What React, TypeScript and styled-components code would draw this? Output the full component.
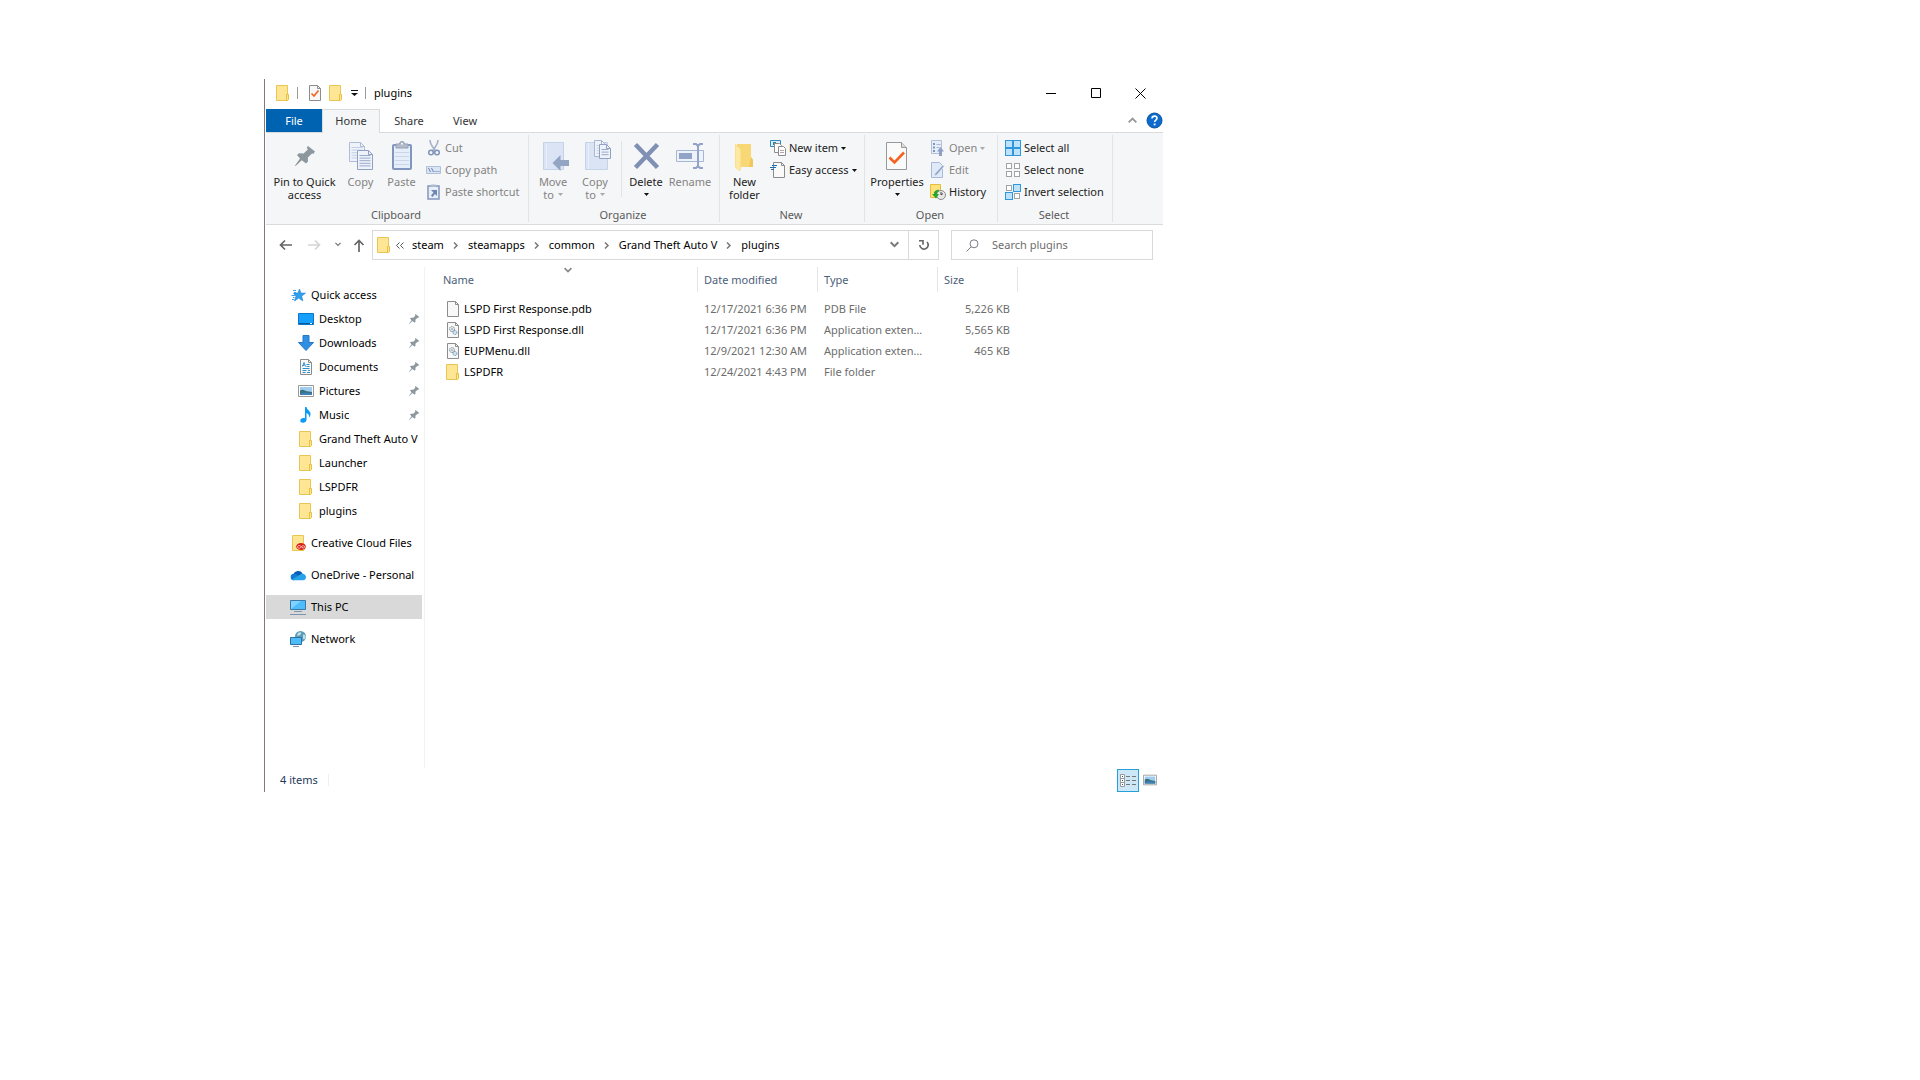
import React from "react";
import styled, { createGlobalStyle } from "styled-components";

const Global = createGlobalStyle`
  *, *::before, *::after { box-sizing: border-box; }
  body {
    margin: 0;
    background: #fff;
    color: #000;
    font: 11px/16px "Noto Sans", "Open Sans", sans-serif;
  }
  button, input { font: inherit; color: inherit; }
`;

const Page = styled.div`
  padding: 79px 24px 24px 264px;
`;

const Window = styled.main`
  max-width: 899px;
  padding-left: 1px;
  border-left: 1px solid #84757f;
  background: #fff;
`;

const Plain = styled.button`
  display: flex;
  align-items: center;
  justify-content: center;
  padding: 0;
  border: 0;
  background: none;
  white-space: nowrap;
`;

/* Title bar */
const TitleBar = styled.header`
  display: flex;
  align-items: center;
  height: 30px;
  padding: 0 0 2px 9px;
`;
const QuickButton = styled(Plain)<{ $w?: number }>`
  width: ${(p) => p.$w ?? 16}px;
  height: 16px;
  margin-right: 6px;
`;
const Tick = styled.span`
  width: 1px;
  height: 12px;
  margin-right: 8px;
  background: #999;
`;
const Title = styled.h1`
  flex: 1;
  margin: 0;
  font-size: 11px;
  font-weight: 400;
`;
const Caption = styled(Plain)`
  width: 45px;
  height: 28px;
`;

/* Tabs */
const Tabs = styled.nav`
  display: flex;
  align-items: stretch;
  height: 24px;
  border-bottom: 1px solid #dadbdc;
`;
const Tab = styled(Plain)<{ $kind?: "file" | "active"; $w?: number }>`
  width: ${(p) => p.$w ?? 58}px;
  color: ${(p) => (p.$kind === "file" ? "#fff" : "#333")};
  background: ${(p) => (p.$kind === "file" ? "#0063b1" : p.$kind === "active" ? "#f5f6f7" : "none")};
  ${(p) => p.$kind === "active" && "border: 1px solid #dadbdc; border-bottom: 0; margin-bottom: -1px; padding-bottom: 1px;"}
`;
const TabTools = styled.div`
  display: flex;
  align-items: center;
  gap: 9px;
  margin-left: auto;
`;

/* Ribbon */
const Ribbon = styled.section`
  display: flex;
  height: 92px;
  padding-top: 2px;
  background: #f5f6f7;
  border-bottom: 1px solid #dadbdc;
`;
const Group = styled.div<{ $w: number }>`
  display: flex;
  flex-direction: column;
  justify-content: space-between;
  width: ${(p) => p.$w}px;
  height: 87px;
  padding: 0 3px;
  border-right: 1px solid #e2e3e4;
`;
const Tools = styled.div`
  display: flex;
`;
const GroupName = styled.div`
  padding-right: 2px;
  text-align: center;
  color: #5a5a5a;
  line-height: 14px;
`;
const Big = styled(Plain)<{ $w?: number; $off?: boolean }>`
  flex-direction: column;
  justify-content: flex-start;
  width: ${(p) => p.$w ?? 42}px;
  padding-top: 5px;
  line-height: 13px;
  color: ${(p) => (p.$off ? "#838383" : "#222")};
  svg.big { margin-bottom: 3px; }
`;
const Line = styled.span`
  display: flex;
  align-items: center;
  gap: 4px;
  min-height: 13px;
`;
const Stack = styled.div`
  display: flex;
  flex-direction: column;
  align-items: flex-start;
  padding: 2px 0 0 4px;
`;
const Small = styled(Plain)<{ $off?: boolean }>`
  gap: 3px;
  height: 22px;
  color: ${(p) => (p.$off ? "#838383" : "#222")};
`;
const InnerRule = styled.span`
  width: 1px;
  height: 56px;
  margin: 6px 3px 0 5px;
  background: #e2e3e4;
`;

/* Address row */
const AddressRow = styled.div`
  display: flex;
  align-items: center;
  padding: 5px 10px 7px 11px;
`;
const NavButton = styled(Plain)<{ $w?: number }>`
  width: ${(p) => p.$w ?? 16}px;
  height: 30px;
`;
const History = styled.div`
  display: flex;
  gap: 10px;
  width: 95px;
`;
const Address = styled.div`
  display: flex;
  flex: 1;
  align-items: center;
  height: 30px;
  margin-right: 12px;
  padding-left: 3px;
  border: 1px solid #d9d9d9;
`;
const Crumbs = styled.ol`
  display: flex;
  flex: 1;
  align-items: center;
  margin: 0;
  padding: 0 0 0 4px;
  list-style: none;
`;
const Crumb = styled.li`
  display: flex;
  align-items: center;
  svg { margin: 0 9px 0 8px; }
`;
const Overflow = styled(Plain)`
  margin-right: 8px;
`;
const Refresh = styled(Plain)`
  width: 30px;
  height: 28px;
  margin-left: 9px;
  border-left: 1px solid #d9d9d9;
`;
const Search = styled.label`
  display: flex;
  align-items: center;
  gap: 13px;
  width: 202px;
  height: 30px;
  padding-left: 14px;
  border: 1px solid #d9d9d9;
`;
const SearchInput = styled.input`
  flex: 1;
  min-width: 0;
  padding: 0;
  border: 0;
  outline: 0;
  background: none;
  &::placeholder { color: #6d6d6d; opacity: 1; }
`;

/* Body */
const Body = styled.div`
  display: flex;
  min-height: 501px;
`;
const Side = styled.nav`
  width: 159px;
  padding: 16px 2px 0 0;
  border-right: 1px solid #f2f2f2;
`;
const SideList = styled.ul`
  margin: 0 0 8px;
  padding: 0;
  list-style: none;
`;
const SideLink = styled.a<{ $deep?: boolean; $on?: boolean }>`
  display: flex;
  align-items: center;
  gap: 5px;
  height: 24px;
  padding: 0 3px 0 ${(p) => (p.$deep ? 32 : 24)}px;
  background: ${(p) => (p.$on ? "#d9d9d9" : "none")};
  color: #000;
  text-decoration: none;
  white-space: nowrap;
`;
const SideText = styled.span`
  flex: 1;
`;
const Content = styled.div`
  flex: 1;
  padding-left: 8px;
`;
const Files = styled.table`
  width: 585px;
  table-layout: fixed;
  border-collapse: collapse;
`;
const Head = styled.th<{ $w?: number }>`
  ${(p) => p.$w && `width: ${p.$w}px;`}
  padding: 0 0 6px;
  color: #4c607a;
  font-weight: 400;
  text-align: left;
`;
const HeadCell = styled.div<{ $first?: boolean }>`
  display: grid;
  grid-template-rows: 5px 20px;
  padding: 0 ${(p) => (p.$first ? 4 : 0)}px 0 ${(p) => (p.$first ? 10 : 6)}px;
  border-right: 1px solid #e5e5e5;
  line-height: 16px;
  svg { display: block; justify-self: center; }
  span { grid-row: 2; }
`;
const Cell = styled.td<{ $right?: boolean; $name?: boolean; $pad?: number }>`
  height: 21px;
  padding: 0 ${(p) => p.$pad ?? 8}px 0 6px;
  overflow: hidden;
  color: ${(p) => (p.$name ? "#000" : "#6d6d6d")};
  text-align: ${(p) => (p.$right ? "right" : "left")};
  text-overflow: ellipsis;
  white-space: nowrap;
`;
const FileName = styled.span`
  display: flex;
  align-items: center;
  gap: 3px;
  padding-left: 6px;
`;
const Status = styled.footer`
  display: flex;
  align-items: center;
  height: 24px;
  padding: 0 2px 0 14px;
`;
const Count = styled.span`
  padding-right: 10px;
  border-right: 1px solid #f0f0f0;
  color: #1e395b;
  line-height: 12px;
`;
const Views = styled.div`
  display: flex;
  align-items: center;
  margin-left: auto;
`;
const ViewButton = styled(Plain)<{ $on?: boolean }>`
  width: 22px;
  height: 23px;
  border: 1px solid ${(p) => (p.$on ? "#26a0da" : "transparent")};
  background: ${(p) => (p.$on ? "#cce8f6" : "none")};
`;

/* Icons */
type Kids = { children: React.ReactNode };
const I16 = ({ children }: Kids) => (
  <svg width="16" height="16" viewBox="0 0 16 16" fill="none" aria-hidden="true">{children}</svg>
);
const I32 = ({ children }: Kids) => (
  <svg className="big" width="32" height="32" viewBox="0 0 32 32" fill="none" aria-hidden="true">{children}</svg>
);

const FolderShape = () => (
  <>
    <path d="M1.5.5h11v15h-11z" fill="#ffe694" stroke="#e9c651" />
    <path d="M11.5 9.5h2v5l-1 1h-1z" fill="#ffe694" stroke="#e9bf3f" />
  </>
);
const Folder = () => <I16><FolderShape /></I16>;

const Triangle = ({ color = "#111" }: { color?: string }) => (
  <svg width="5" height="3" viewBox="0 0 5 3" aria-hidden="true"><path d="M0 0h5L2.5 3z" fill={color} /></svg>
);

const PinPath = "M13 0 20 5.5 18.5 7.8 17 7.4 12.8 11.6 13 15.6 11 17.6 6.8 14.2.6 20 0 19.4 5 12.4 2 9 4 7.3 8.6 7.6 12.8 3.6 11.8 1.6Z";
const Pin = () => (
  <svg width="10" height="10" viewBox="0 0 20 20" aria-hidden="true"><path d={PinPath} fill="#8d979e" /></svg>
);

type DocProps = { x: number; y: number; w: number; h: number; stroke: string; line: string };
const Doc = ({ x, y, w, h, stroke, line }: DocProps) => {
  const rows: number[] = [];
  for (let r = y + 5.5; r < y + h - 2; r += 2.6) rows.push(r);
  return (
    <>
      <path d={`M${x + 0.5} ${y + 0.5}h${w - 5}l4 4v${h - 5}h${-(w - 1)}z`} fill="#eef3fb" stroke={stroke} />
      <path d={`M${x + w - 4.5} ${y + 0.5}v4h4`} stroke={stroke} />
      {rows.map((r) => <path key={r} d={`M${x + 2.5} ${r}h${w - 5}`} stroke={line} />)}
    </>
  );
};

const CopyIcon = () => (
  <I32>
    <Doc x={4} y={2} w={16} h={20} stroke="#afbcd5" line="#c3cfe4" />
    <Doc x={12} y={10} w={16} h={20} stroke="#91a1c2" line="#9aa9c8" />
  </I32>
);
const PasteIcon = () => (
  <I32>
    <rect x="7" y="5" width="18" height="24" rx="1" fill="#e6eefa" stroke="#8296bd" strokeWidth="2" />
    <path d="M9 12.5h14M9 16.5h14M9 20.5h14M9 24.5h14" stroke="#c8d5ea" />
    <path d="M10 4h3.5a2.5 2.5 0 0 1 5 0H22v4H10z" fill="#b2bbc9" stroke="#929fb6" />
    <circle cx="16" cy="3.8" r="1" fill="#f4f5f7" />
  </I32>
);
const MoveIcon = () => (
  <I32>
    <path d="M6.5 2.5h20v27h-20z" fill="#dae4f4" stroke="#c5d2e8" />
    <path d="M9.5 3v26" stroke="#e9f0fa" />
    <path d="M15.5 23 23.5 15v5H32v6h-8.5v5z" fill="#94a4c3" />
  </I32>
);
const CopyToIcon = () => (
  <I32>
    <path d="M6.5 2.5h22v27h-22z" fill="#dae4f4" stroke="#c5d2e8" />
    <path d="M9.5 3v26" stroke="#e9f0fa" />
    <Doc x={15} y={0} w={12} h={17} stroke="#a9b7d1" line="#c3cfe4" />
    <Doc x={20} y={4} w={12} h={15} stroke="#91a1c2" line="#9aa9c8" />
  </I32>
);
const NewFolderIcon = () => (
  <I32>
    <path d="M8 4h14v13l2 3v7H8z" fill="#f8d775" />
    <path d="M22 17l2 3v7h-4z" fill="#efc75b" />
    <path d="M6.5 4.5l5 5v20l-1 1.5-4-4z" fill="#ffe9a2" stroke="#fbdf8b" />
  </I32>
);
const PropsShape = () => (
  <>
    <path d="M.5.5h15l5 5v22H.5z" fill="#fafafa" stroke="#999" />
    <path d="M15.5.5v5h5" fill="#ddd" stroke="#999" />
    <path d="M3.5 15.5l5 5L18 10.5" stroke="#f4621f" strokeWidth="2.6" />
  </>
);

const Grid = ({ on }: { on: boolean[] }) => (
  <I16>
    {on.map((sel, i) => {
      const x = (i % 2) * 8;
      const y = Math.floor(i / 2) * 8;
      return sel
        ? <rect key={i} x={x + 0.5} y={y + 0.5} width="7" height="7" fill="#bfe2fb" stroke="#2f96e0" />
        : <rect key={i} x={x + 1.5} y={y + 1.5} width="5" height="5" fill="#fff" stroke="#a3a3a3" />;
    })}
  </I16>
);

const Chevron = ({ w = 6, color = "#777", d = "M.5 1l3 3 3-3" }: { w?: number; color?: string; d?: string }) => (
  <svg width={w} height={w} viewBox="0 0 7 7" fill="none" aria-hidden="true"><path d={d} stroke={color} strokeWidth="1.5" /></svg>
);

const FileShape = () => (
  <>
    <path d="M2.5.5h8l3 3v12h-11z" fill="#f8f8f8" stroke="#8c8c8c" />
    <path d="M10.5.5v3h3" stroke="#8c8c8c" />
  </>
);
const BlankFile = () => <I16><FileShape /></I16>;
const DllFile = () => (
  <I16>
    <FileShape />
    <circle cx="7" cy="7" r="2.5" fill="#e5eaee" stroke="#7d8c97" strokeDasharray="1.5 .6" />
    <circle cx="7" cy="7" r=".8" fill="#7d8c97" />
    <circle cx="10" cy="10.5" r="2" fill="#cfe3f2" stroke="#6d94b0" strokeDasharray="1.3 .5" />
  </I16>
);
const PictureShape = () => (
  <>
    <path d="M.5 2.5h15v11H.5z" fill="#fff" stroke="#999" />
    <path d="M2 4h12v8H2z" fill="#9fcdf0" />
    <path d="M2 7.500c3-2 5 0 7 .8l5 .7v3H2z" fill="#39707d" />
    <path d="M2 10.5c4-1.500 8-1 12-.3V12H2z" fill="#3f7fb4" />
  </>
);
const PictureIcon = () => <I16><PictureShape /></I16>;

const sideTop = [
  { name: "Desktop", pin: true, icon: <I16><path d="M.5 2.5h15v11H.5z" fill="#16a0fb" stroke="#0b78cb" /><path d="M1 12.5h14" stroke="#075a9c" /><path d="M12 12.5h2" stroke="#fff" /></I16> },
  { name: "Downloads", pin: true, icon: <I16><path d="M5 .5h6v7h4.500L8 15.500.5 7.500H5z" fill="#2e8fe4" stroke="#2478c6" /></I16> },
  { name: "Documents", pin: true, icon: <I16><FileShape /><path d="M4.500 6.500h2M8.500 5.500h3M8.500 7.500h3M4.500 9.500h7M4.500 11.500h4M10 11.500h2M4.500 13.500h3M9 13.500h3" stroke="#2f8fce" /><path d="M4.500 7.500 6 3.500l1.500 4" stroke="#2f8fce" /></I16> },
  { name: "Pictures", pin: true, icon: <PictureIcon /> },
  { name: "Music", pin: true, icon: <I16><path d="M7 0h1.500c.3 3 4.500 4 4 7.500-.2 1.500-1 2.500-1.500 3 .5-2-.5-4-2.500-4.500v6.500c0 2-1.500 3.300-3.500 3.300S2.300 14.800 2.300 13.500 3.800 11 5.500 11c.6 0 1.100.1 1.500.3z" fill="#0a9bf5" /></I16> },
  { name: "Grand Theft Auto V", icon: <Folder /> },
  { name: "Launcher", icon: <Folder /> },
  { name: "LSPDFR", icon: <Folder /> },
  { name: "plugins", icon: <Folder /> },
];

const StarIcon = () => (
  <I16>
    <path d="M9.500 2l1.400 4 4.600.2-3.800 2.900 1.100 4.800-4.100-2.800L4.500 14l1.400-4.700L3.500 6h4.500z" fill="#2f9ff0" stroke="#1c7fc9" strokeWidth=".6" />
    <path d="M3 3.500h3M4 5.500h2M1.500 8.500h4M3 10.500h1.500M2 12.500h2" stroke="#3aa0ea" />
  </I16>
);
const CreativeIcon = () => (
  <I16>
    <g transform="translate(1 0)"><FolderShape /></g>
    <ellipse cx="11" cy="11.5" rx="4.8" ry="3.6" fill="#da1f16" />
    <path d="M7.500 12c0-1.500 2-2 3.300-.8l1.400 1.400c1 .8 2.400.3 2.400-.8s-1.500-1.500-2.400-.7l-1.800 1.600c-1.200.9-2.900.4-2.900-.7z" stroke="#ffe4df" strokeWidth=".8" />
  </I16>
);
const CloudIcon = () => (
  <I16>
    <path d="M3.500 7.500a5 5 0 0 1 9-1.200l-2 5H2z" fill="#0a5db3" />
    <path d="M3.300 6.800c2-.5 3.500.3 5 1.700l-4 4.800H3.500a3.300 3.300 0 0 1-.2-6.500z" fill="#0f7bd2" />
    <path d="M2 12.500 11 7c2.500-1.200 5 .8 5 3.300 0 1.700-1.300 3-3 3H3.500c-.6 0-1.200-.4-1.500-.8z" fill="#29a3e8" />
  </I16>
);
const PcIcon = () => (
  <I16>
    <path d="M.5 1.5h15v9H.5z" fill="#4ebbfb" stroke="#3879a8" />
    <path d="M1 10V2h10z" fill="#82d2ff" />
    <path d="M4 12.500h8M0 15.500h16" stroke="#7b96ad" />
  </I16>
);
const NetworkIcon = () => (
  <I16>
    <circle cx="10.500" cy="5.500" r="5.500" fill="#5d9cb8" />
    <path d="M8 2c2-1.500 3.500-.8 3 .7S8.500 5 7 4.500zM13 3.500c2 0 3 1 2.500 3s-2 2.500-2.500 1z" fill="#c2dfe2" />
    <path d="M.5 6.500h11v7H.5z" fill="#4ebbfb" stroke="#2d70a3" />
    <path d="M3 15.500h6" stroke="#7b96ad" />
  </I16>
);

const roots = [
  { name: "Creative Cloud Files", icon: <CreativeIcon /> },
  { name: "OneDrive - Personal", icon: <CloudIcon /> },
  { name: "This PC", icon: <PcIcon />, on: true },
  { name: "Network", icon: <NetworkIcon /> },
];

const files = [
  { name: "LSPD First Response.pdb", date: "12/17/2021 6:36 PM", type: "PDB File", size: "5,226 KB", icon: <BlankFile /> },
  { name: "LSPD First Response.dll", date: "12/17/2021 6:36 PM", type: "Application extension", size: "5,565 KB", icon: <DllFile /> },
  { name: "EUPMenu.dll", date: "12/9/2021 12:30 AM", type: "Application extension", size: "465 KB", icon: <DllFile /> },
  { name: "LSPDFR", date: "12/24/2021 4:43 PM", type: "File folder", size: "", icon: <Folder /> },
];

const crumbs = ["steam", "steamapps", "common", "Grand Theft Auto V", "plugins"];

export default function App() {
  return (
    <Page>
      <Global />
      <Window>
        <TitleBar>
          <QuickButton aria-label="Folder menu"><Folder /></QuickButton>
          <Tick />
          <QuickButton aria-label="Properties">
            <I16><g transform="translate(1 0)"><FileShape /><path d="M4.500 8.500 7 11l4.500-5.500" stroke="#f4621f" strokeWidth="1.600" /></g></I16>
          </QuickButton>
          <QuickButton aria-label="New folder"><Folder /></QuickButton>
          <QuickButton $w={9} aria-label="Customize toolbar">
            <svg width="7" height="6" viewBox="0 0 7 6" aria-hidden="true"><path d="M0 0h7v1H0zM0 3h7L3.500 6z" fill="#111" /></svg>
          </QuickButton>
          <Tick />
          <Title>plugins</Title>
          <Caption aria-label="Minimize"><svg width="10" height="10"><path d="M0 5.500h10" stroke="#000" /></svg></Caption>
          <Caption aria-label="Maximize"><svg width="10" height="10"><path d="M.5.5h9v9h-9z" fill="none" stroke="#000" /></svg></Caption>
          <Caption aria-label="Close"><svg width="11" height="11"><path d="M.5.5l10 10M10.500.5l-10 10" stroke="#000" /></svg></Caption>
        </TitleBar>

        <Tabs>
          <Tab $kind="file" $w={56}>File</Tab>
          <Tab $kind="active">Home</Tab>
          <Tab>Share</Tab>
          <Tab $w={54}>View</Tab>
          <TabTools>
            <Plain aria-label="Collapse ribbon"><Chevron w={9} color="#999" d="M.5 5l3-3 3 3" /></Plain>
            <Plain aria-label="Help">
              <svg width="17" height="17" viewBox="0 0 17 17" aria-hidden="true">
                <circle cx="8.500" cy="8.500" r="7.500" fill="#0a6cce" stroke="#0a519c" />
                <path d="M6 6.500c0-3.200 5-3 5-.2 0 1.800-2.400 1.800-2.400 3.700" fill="none" stroke="#fff" strokeWidth="1.600" />
                <path d="M7.700 11.500h1.800v1.800H7.700z" fill="#fff" />
              </svg>
            </Plain>
          </TabTools>
        </Tabs>

        <Ribbon>
          <Group $w={263}>
            <Tools>
              <Big $w={71}>
                <I32><path d={PinPath} transform="translate(6 6)" fill="#8d979e" /></I32>
                <Line>Pin to Quick</Line><Line>access</Line>
              </Big>
              <Big $w={41} $off><CopyIcon /><Line>Copy</Line></Big>
              <Big $w={41} $off><PasteIcon /><Line>Paste</Line></Big>
              <Stack>
                <Small $off>
                  <I16><path d="M4 0c0 4 2 6 5.500 11M12 0c0 4-2 6-5.500 11" stroke="#a6b2c6" strokeWidth="1.600" /><circle cx="5" cy="12.500" r="2.300" stroke="#7f92b8" strokeWidth="1.500" /><circle cx="11" cy="12.500" r="2.300" stroke="#7f92b8" strokeWidth="1.500" /></I16>
                  Cut
                </Small>
                <Small $off>
                  <I16><path d="M.5 4.500h14v7H.5z" fill="#d9e4f5" stroke="#b1c0da" /><path d="M2.500 6l2 4M5.500 6l2 4M8.500 9.500h1M10.500 9.500h1M12.500 9.500h1" stroke="#6f83ab" /></I16>
                  Copy path
                </Small>
                <Small $off>
                  <I16><path d="M2 2h11v13H2z" fill="#e6eefa" stroke="#8296bd" strokeWidth="1.500" /><path d="M5 .5h5v2.500H5z" fill="#b2bbc9" /><path d="M5 6h6v6L9 10l-2.500 3-1.500-1.500L7.500 8.500z" fill="#6f86b2" /></I16>
                  Paste shortcut
                </Small>
              </Stack>
            </Tools>
            <GroupName>Clipboard</GroupName>
          </Group>

          <Group $w={191}>
            <Tools>
              <Big $off><MoveIcon /><Line>Move</Line><Line>to <Triangle color="#aaa" /></Line></Big>
              <Big $off><CopyToIcon /><Line>Copy</Line><Line>to <Triangle color="#aaa" /></Line></Big>
              <InnerRule />
              <Big>
                <I32><path d="M5.500 4.500l22 23M27.500 4.500l-22 23" stroke="#7f90b4" strokeWidth="4.500" /></I32>
                <Line>Delete</Line><Line><Triangle /></Line>
              </Big>
              <Big $w={46} $off>
                <I32><path d="M2.500 10.500h27v11h-27z" fill="#eef3fb" stroke="#a6b7d6" /><path d="M5 13h13v6H5z" fill="#91a3c6" /><path d="M24 4v24M19 4h3l2 2 2-2h3M19 28h3l2-2 2 2h3" stroke="#91a3c6" strokeWidth="2" /></I32>
                <Line>Rename</Line>
              </Big>
            </Tools>
            <GroupName>Organize</GroupName>
          </Group>

          <Group $w={145}>
            <Tools>
              <Big $w={43}><NewFolderIcon /><Line>New</Line><Line>folder</Line></Big>
              <Stack>
                <Small>
                  <I16><path d="M.5.5h10v6H.5z" fill="#d8eefb" stroke="#3487b8" /><path d="M3 2h3v3H3z" fill="#3b7f9f" /><path d="M4.500 3.500h5l2 2v7h-7z" fill="#fff" stroke="#8c8c8c" /><path d="M8.500 6.500h5l2 2v7h-7z" fill="#fff" stroke="#8c8c8c" /><path d="M10 10.500h4M10 12.500h4" stroke="#b9a5a5" /></I16>
                  New item <Triangle />
                </Small>
                <Small>
                  <I16><path d="M3.500.5h8l3 3v12h-11z" fill="#fafafa" stroke="#8c8c8c" /><path d="M11.500.5v3h3" stroke="#8c8c8c" /><path d="M2 3.500h5M0 5.500h6M1 7.500h3" stroke="#1b6fb0" /></I16>
                  Easy access <Triangle />
                </Small>
              </Stack>
            </Tools>
            <GroupName>New</GroupName>
          </Group>

          <Group $w={133}>
            <Tools>
              <Big $w={58}>
                <I32><g transform="translate(5 2)"><PropsShape /></g></I32>
                <Line>Properties</Line><Line><Triangle /></Line>
              </Big>
              <Stack>
                <Small $off>
                  <I16><path d="M1.500.5h10v13h-10z" fill="#e6eefa" stroke="#b1bfd8" /><path d="M3 3h2v2H3zM3 6.500h2v2H3zM3 10h2v2H3z" fill="#8093bb" /><path d="M6.500 4.500h4M6.500 7.500h3" stroke="#a9b8d5" /><path d="M10.500 7 14 11.500h-2V16H9v-4.500H7z" fill="#8ea0c4" /></I16>
                  Open <Triangle color="#aaa" />
                </Small>
                <Small $off>
                  <I16><path d="M1.500.5h8l3 3v12h-11z" fill="#dfe9f8" stroke="#a9bad8" /><path d="M14.500 4 7 13l-3 1.500L5 11.500 12.500 3z" fill="#94a6c9" stroke="#eef3fb" strokeWidth=".7" /></I16>
                  Edit
                </Small>
                <Small>
                  <I16><path d="M.5.5h10v13H.5z" fill="#ffe27b" stroke="#e5bd3c" /><circle cx="11" cy="11" r="4.500" fill="#e8e8e8" stroke="#8b8b8b" /><path d="M11 8v3l2-1.500" stroke="#444" /><path d="M8.500 5.500C5 6 3.500 8 4 10H2l4 4.500L9 10H7c0-1.500.5-2.500 2-3z" fill="#29a52b" /></I16>
                  History
                </Small>
              </Stack>
            </Tools>
            <GroupName>Open</GroupName>
          </Group>

          <Group $w={115}>
            <Stack>
              <Small><Grid on={[true, true, true, true]} />Select all</Small>
              <Small><Grid on={[false, false, false, false]} />Select none</Small>
              <Small><Grid on={[false, true, true, false]} />Invert selection</Small>
            </Stack>
            <GroupName>Select</GroupName>
          </Group>
        </Ribbon>

        <AddressRow>
          <History>
            <NavButton aria-label="Back"><svg width="13" height="12" fill="none"><path d="M13 6H1.500M6 1.500 1.500 6 6 10.500" stroke="#666" strokeWidth="1.700" /></svg></NavButton>
            <NavButton $w={22} aria-label="Forward"><svg width="13" height="12" fill="none"><path d="M0 6h11.500M7 1.500 11.500 6 7 10.500" stroke="#d5d5d5" strokeWidth="1.700" /></svg></NavButton>
            <NavButton $w={6} aria-label="Recent locations"><Chevron /></NavButton>
            <NavButton aria-label="Up"><svg width="12" height="13" fill="none"><path d="M6 13V1.500M1.500 6 6 1.500 10.500 6" stroke="#666" strokeWidth="1.700" /></svg></NavButton>
          </History>
          <Address>
            <Folder />
            <Crumbs>
              <li>
                <Overflow aria-label="Parent folders">
                  <svg width="8" height="7" fill="none" aria-hidden="true"><path d="M3.500.5l-3 3 3 3M7.500.5l-3 3 3 3" stroke="#555" /></svg>
                </Overflow>
              </li>
              {crumbs.map((c, i) => (
                <Crumb key={c}>
                  <Plain>{c}</Plain>
                  {i < crumbs.length - 1 && <Chevron w={7} d="M2 .5l3 3-3 3" />}
                </Crumb>
              ))}
            </Crumbs>
            <Plain aria-label="Previous locations"><Chevron w={9} /></Plain>
            <Refresh aria-label="Refresh">
              <svg width="12" height="12" viewBox="0 0 12 12" fill="none" aria-hidden="true"><path d="M9 3a4.200 4.200 0 1 1-7.200 3" stroke="#666" strokeWidth="1.600" /><path d="M1 1.800h4v4" stroke="#666" strokeWidth="1.600" /></svg>
            </Refresh>
          </Address>
          <Search aria-label="Search plugins">
            <svg width="13" height="13" fill="none" aria-hidden="true"><circle cx="8" cy="4.800" r="4" stroke="#7a7a85" /><path d="M5.200 7.700.5 12.500" stroke="#7a7a85" /></svg>
            <SearchInput type="text" placeholder="Search plugins" />
          </Search>
        </AddressRow>

        <Body>
          <Side>
            <SideList>
              <li><SideLink href="#quick"><StarIcon /><SideText>Quick access</SideText></SideLink></li>
              {sideTop.map((s) => (
                <li key={s.name}>
                  <SideLink href="#folder" $deep>{s.icon}<SideText>{s.name}</SideText>{s.pin && <Pin />}</SideLink>
                </li>
              ))}
            </SideList>
            {roots.map((r) => (
              <SideList key={r.name}>
                <li><SideLink href="#root" $on={r.on}>{r.icon}<SideText>{r.name}</SideText></SideLink></li>
              </SideList>
            ))}
          </Side>
          <Content>
            <Files>
              <thead>
                <tr>
                  <Head><HeadCell $first><Chevron w={8} color="#888" /><span>Name</span></HeadCell></Head>
                  <Head $w={120}><HeadCell><span>Date modified</span></HeadCell></Head>
                  <Head $w={120}><HeadCell><span>Type</span></HeadCell></Head>
                  <Head $w={80}><HeadCell><span>Size</span></HeadCell></Head>
                </tr>
              </thead>
              <tbody>
                {files.map((f) => (
                  <tr key={f.name}>
                    <Cell $name><FileName>{f.icon}{f.name}</FileName></Cell>
                    <Cell>{f.date}</Cell>
                    <Cell $pad={12}>{f.type}</Cell>
                    <Cell $right>{f.size}</Cell>
                  </tr>
                ))}
              </tbody>
            </Files>
          </Content>
        </Body>

        <Status>
          <Count>4 items</Count>
          <Views>
            <ViewButton $on aria-label="Details view">
              <svg width="16" height="14" viewBox="0 0 16 14" fill="none" aria-hidden="true">
                <path d="M.5 1.500h4v4h-4zM.5 5.500h4v4h-4zM.5 9.500h4v4h-4z" fill="#fff" stroke="#999" />
                <path d="M2 3h1v1H2zM2 7h1v1H2zM2 11h1v1H2z" fill="#356" />
                <path d="M6 3.500h4M12 3.500h4M6 7.500h4M12 7.500h4M6 11.500h4M12 11.500h4" stroke="#777" />
              </svg>
            </ViewButton>
            <ViewButton aria-label="Large icons view">
              <svg width="14" height="14" viewBox="0 0 16 16" fill="none" aria-hidden="true"><PictureShape /></svg>
            </ViewButton>
          </Views>
        </Status>
      </Window>
    </Page>
  );
}
